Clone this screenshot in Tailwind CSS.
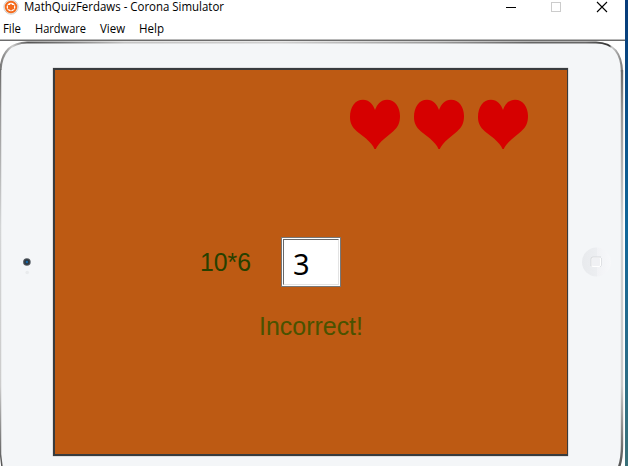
<!DOCTYPE html>
<html lang="en">
<head>
<meta charset="utf-8">
<title>MathQuizFerdaws - Corona Simulator</title>
<script src="https://cdn.jsdelivr.net/npm/@tailwindcss/browser@4"></script>
</head>
<body class="h-[466px] w-[628px] overflow-hidden bg-white font-['Open_Sans','Noto_Sans',sans-serif] text-black">
<div class="flex h-full w-full">
  <main class="flex h-full w-[625px] flex-col">
    <header class="flex h-[15px] items-start">
      <svg class="ml-[3px] h-[15px] w-4 shrink-0" viewBox="0 0 16 15">
        <circle cx="8" cy="7" r="7.200" fill="#f3eeea" stroke="#c9c5c2" stroke-width=".8"/>
        <circle cx="8" cy="7" r="5.300" fill="#fff" stroke="#f46a1b" stroke-width="1.900"/>
        <path d="M8 3.500 9.200 5h2.300l-.6 2.200.6 1.800-2 .5L8 10.800 6.500 9.500l-2-.5.6-1.800L4.500 5h2.300Z" fill="#f46a1b"/>
      </svg>
      <svg class="ml-[5px] h-[18px] w-[205px] shrink-0 overflow-visible" viewBox="0 0 205 18"><text x="0" y="11" font-size="11.800" textLength="200" lengthAdjust="spacingAndGlyphs">MathQuizFerdaws - Corona Simulator</text></svg>
      <svg class="ml-auto h-[15px] w-[120px]" viewBox="0 0 120 15" fill="none" shape-rendering="crispEdges">
        <path d="M1 7.500h10" stroke="#000"/>
        <rect x="46.500" y="2.500" width="9" height="9" stroke="#ccc"/>
        <path d="M92 2l10 10M102 2L92 12" stroke="#000" stroke-width="1.100" shape-rendering="auto"/>
      </svg>
    </header>
    <nav class="flex h-6 shrink-0">
      <svg class="h-6 w-[180px]" viewBox="0 0 180 24" font-size="12">
        <text x="3" y="18" textLength="18" lengthAdjust="spacingAndGlyphs">File</text>
        <text x="35" y="18" textLength="51" lengthAdjust="spacingAndGlyphs">Hardware</text>
        <text x="100" y="18" textLength="25" lengthAdjust="spacingAndGlyphs">View</text>
        <text x="139" y="18" textLength="25" lengthAdjust="spacingAndGlyphs">Help</text>
      </svg>
    </nav>
    <div class="h-px shrink-0 bg-[#b8b8b8]"></div>
    <div class="h-px shrink-0 bg-[#6c6c6c]"></div>
    <section class="relative h-[425px] shrink-0">
      <svg class="absolute inset-0 h-[425px] w-[625px]" viewBox="0 41 625 425" fill="none">
        <defs>
          <linearGradient id="top" gradientUnits="userSpaceOnUse" x1="0" y1="0" x2="623" y2="0">
            <stop offset="0" stop-color="#777"/><stop offset=".02" stop-color="#ccc"/><stop offset=".045" stop-color="#555"/><stop offset=".1" stop-color="#777"/><stop offset=".2" stop-color="#c4c4c4"/><stop offset=".45" stop-color="#d0d0d0"/><stop offset=".7" stop-color="#9b9b9b"/><stop offset=".85" stop-color="#666"/><stop offset=".94" stop-color="#666"/><stop offset=".978" stop-color="#333"/><stop offset=".982" stop-color="#ccc"/><stop offset="1" stop-color="#777"/>
          </linearGradient>
          <linearGradient id="side" x1="0" y1="65" x2="0" y2="466" gradientUnits="userSpaceOnUse">
            <stop stop-color="#666"/><stop offset=".12" stop-color="#999"/><stop offset=".4" stop-color="#d3d5d6"/><stop offset=".8" stop-color="#ccc"/><stop offset="1" stop-color="#555"/>
          </linearGradient>
          <linearGradient id="home" x1="0" y1="0" x2="1" y2="0"><stop stop-color="#e8eaed"/><stop offset=".5" stop-color="#eceef1"/><stop offset=".51" stop-color="#f1f2f5"/><stop offset="1" stop-color="#f7f8fa"/></linearGradient>
        </defs>
        <path d="M0 70C1 53 9 43 27 42H596C614 43 622 53 623 72V449L619 466H2L0 455Z" fill="#f4f6f8"/>
        <path d="M.5 70C1.500 53 9 43 27 42.500H596C614 43 621.500 53 622 72" stroke="url(#top)" stroke-width="2.200"/>
        <path d="M.5 69V454L2 467" stroke="url(#side)" stroke-width="1.500"/>
        <path d="M622 70V445Q622 459 619 467" stroke="url(#side)" stroke-width="2.400"/>
        <circle cx="26.900" cy="262" r="3.800" fill="#51575e"/><circle cx="26.900" cy="262" r="2.700" fill="#303941"/><circle cx="26.900" cy="262" r="1.200" fill="#1769aa"/>
        <circle cx="27.200" cy="272.500" r="1.800" fill="#e9ebed"/>
        <circle cx="596.500" cy="262" r="14.500" fill="url(#home)"/>
        <rect x="591.500" y="257.500" width="9" height="9" rx="1.500" fill="#f0f1f4" stroke="#fff"/>
        <path d="M591 266v-7q0-2 2-2h8" stroke="#d7d9dc"/>
        <path d="M601.500 258v7.500l-1.500 1.500" stroke="#dfe1e4"/>
      </svg>
      <div class="relative ml-[53px] h-[415px] w-[516px] pt-[27px]">
        <div class="flex h-[388px] w-[515px] flex-col border-y-2 border-r border-l-2 border-[#383b3e] bg-[#bd5a13] shadow-[0_0_1px_#777]">
          <div class="mt-[29px] flex justify-end gap-[14px] pr-[39px]">
            <svg class="h-[51px] w-[50px]" viewBox="0 0 50 51" fill="#d60000"><path d="M25 11C27 5 31 .7 37 .7C45 .7 50 8 50 17C50 24 48 28 43 32.500L34 40C30 43.500 27 47 25.800 50H24.500C23 46 20 43.500 16 39.500L7 32.500C2 28 0 24 0 18C0 8 5 .7 13 .7C19 .7 23 5 25 11Z"/></svg>
            <svg class="h-[51px] w-[50px]" viewBox="0 0 50 51" fill="#d60000"><path d="M25 11C27 5 31 .7 37 .7C45 .7 50 8 50 17C50 24 48 28 43 32.500L34 40C30 43.500 27 47 25.800 50H24.500C23 46 20 43.500 16 39.500L7 32.500C2 28 0 24 0 18C0 8 5 .7 13 .7C19 .7 23 5 25 11Z"/></svg>
            <svg class="h-[51px] w-[50px]" viewBox="0 0 50 51" fill="#d60000"><path d="M25 11C27 5 31 .7 37 .7C45 .7 50 8 50 17C50 24 48 28 43 32.500L34 40C30 43.500 27 47 25.800 50H24.500C23 46 20 43.500 16 39.500L7 32.500C2 28 0 24 0 18C0 8 5 .7 13 .7C19 .7 23 5 25 11Z"/></svg>
          </div>
          <div class="mt-[87px] flex h-[50px] pl-[145px]">
            <svg class="h-[50px] w-[60px]" viewBox="0 0 60 50"><text x="0" y="33.500" fill="#264000" font-family="Liberation Sans, Arial, sans-serif" font-size="25.500" textLength="51" lengthAdjust="spacingAndGlyphs">10*6</text></svg>
            <div class="ml-[21px] h-[50px] w-[60px] border border-[#777] bg-white p-px">
              <div class="h-full w-full border border-t-[#686868] border-r-[#e3e3e3] border-b-[#e3e3e3] border-l-[#686868] pt-[5px] pl-[9px] font-['Noto_Sans',sans-serif] text-[29px] leading-[38px]">3</div>
            </div>
          </div>
          <svg class="mt-[24px] ml-[204px] h-[32px] w-[110px]" viewBox="0 0 110 32"><text x="0" y="24" fill="#4a5200" font-family="Liberation Sans, Arial, sans-serif" font-size="25.500" textLength="104" lengthAdjust="spacingAndGlyphs">Incorrect!</text></svg>
        </div>
      </div>
    </section>
  </main>
  <aside class="h-full w-[3px] bg-linear-to-b from-[#073b79] via-[#11689a] to-[#397078]"></aside>
</div>
</body>
</html>
